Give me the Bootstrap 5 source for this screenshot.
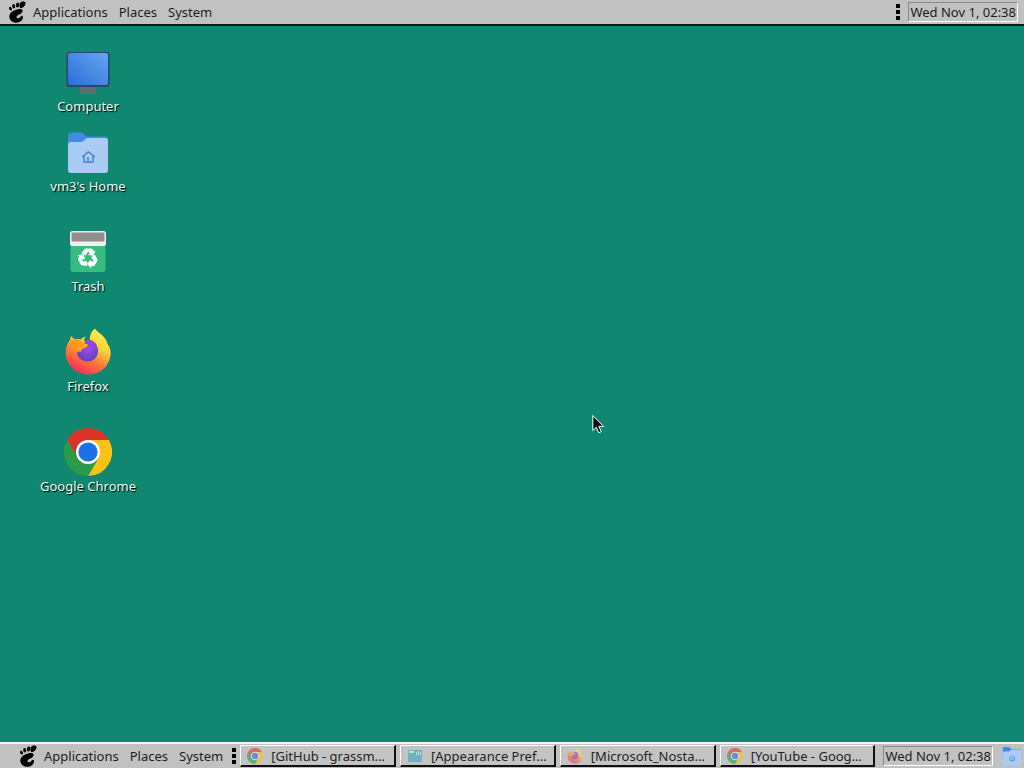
<!DOCTYPE html>
<html lang="en">
<head>
<meta charset="utf-8">
<meta name="viewport" content="width=device-width, initial-scale=1">
<title>Desktop</title>
<link href="https://cdn.jsdelivr.net/npm/bootstrap@5.3.0/dist/css/bootstrap.min.css" rel="stylesheet">
<style>
body { font-family: "Noto Sans", sans-serif; font-size: 13px; line-height: 20px; color: #1c1c1c; background: #108770; cursor: default; }
.panel { background: #c2c1c2; height: 26px; }
.panel-top { border-bottom: 2px solid #161616; padding-left: 8px; padding-right: 6px; }
.panel-bottom { border-top: 2px solid #f4f4f4; padding-left: 19px; padding-right: 1px; }
.menu-item { border: 0; background: none; padding: 0 5px 0 6px; color: inherit; line-height: 20px; }
.menu-item:hover { background: #d4d4d4; }
.foot { width: 19px; height: 22px; }
.grip { width: 4px; height: 16px; }
.clock { border: 1px solid #888; border-right-color: #fff; border-bottom-color: #fff; padding: 0 1px; background: none; color: inherit; height: 20px; line-height: 18px; }
.task { flex: 1 1 0; min-width: 0; height: 22px; padding: 1px 6px 0 5px; background: #c4c3c4; color: #222; border: 2px solid #fff; border-width: 1px 2px 2px 1px; border-right-color: #111; border-bottom-color: #111; line-height: 18px; }
.task svg { width: 18px; height: 16px; margin-right: 7px; opacity: .6; }
.launchers { padding: 22px 38px; }
.launcher { width: 100px; color: #eefaf6; text-shadow: 1px 1px 1px #000; text-decoration: none; margin-bottom: 32px; }
.launcher:first-child { margin-bottom: 12px; }
.launcher svg { width: 48px; height: 48px; }
.pointer { left: 58%; top: 54.2%; margin-left: -2px; width: 13px; height: 20px; }
</style>
</head>
<body class="d-flex flex-column vh-100 overflow-hidden">
<svg width="0" height="0" class="position-absolute" aria-hidden="true">
  <defs>
    <linearGradient id="screen" x1="0" y1="1" x2="1" y2="0"><stop stop-color="#286fd9"/><stop offset="1" stop-color="#68a4f0"/></linearGradient>
    <linearGradient id="flame" x1=".8" y1="0" x2=".3" y2="1"><stop stop-color="#fff24a"/><stop offset=".35" stop-color="#ffd23a"/><stop offset=".65" stop-color="#ff7a34"/><stop offset="1" stop-color="#f5265c"/></linearGradient>
    <linearGradient id="flameHead" x1="0" y1="0" x2="1" y2="0"><stop stop-color="#ff8a1e"/><stop offset="1" stop-color="#ffb02b"/></linearGradient>
    <radialGradient id="globe" cx=".55" cy=".35" r=".7"><stop stop-color="#a448e0"/><stop offset="1" stop-color="#5644c4"/></radialGradient>
    <symbol id="i-foot" viewBox="0 0 19 22">
      <path d="M14.2.5c2.700-.5 4 .6 3.100 3.100-.7 1.900-2.700 3.600-4.300 3.600-2.200 0-2.200-6.200 1.200-6.700Z"/>
      <ellipse cx="9.600" cy="4" rx="1.700" ry="2.600" transform="rotate(12 9.600 4)"/>
      <ellipse cx="5.700" cy="5.300" rx="1.500" ry="2.300" transform="rotate(-8 5.700 5.300)"/>
      <ellipse cx="2.500" cy="7.700" rx="1.300" ry="2" transform="rotate(-28 2.500 7.700)"/>
      <path d="M14.600 10.200c.4-1.900-1.900-2.500-4.800-2C5.500 9 1.300 11.800 1.300 15.500c0 3.700 3.300 6.300 7 6.300 3.500 0 6.300-2.100 6.700-5.200.2-1.900-1.500-2.300-2.400-1.200-.8 1.200-1.400 2-2.900 1.800-1.300-.2-1.700-1.400-.5-2.500 1.500-1.400 4.900-1.900 5.400-4.500Z"/>
    </symbol>
    <symbol id="i-grip" viewBox="0 0 4 16"><path d="M0 0h4v4H0zM0 6h4v4H0zM0 12h4v4H0z"/></symbol>
    <symbol id="i-chrome" viewBox="0 0 48 48">
      <path fill="#db3328" d="M3.200 12A24 24 0 0 1 44.800 12H24L13.600 30Z"/>
      <path fill="#fbc116" d="M44.800 12A24 24 0 0 1 24 48L34.400 30 24 12Z"/>
      <path fill="#2a9b49" d="M24 48A24 24 0 0 1 3.200 12L13.600 30H34.400Z"/>
      <circle cx="24" cy="24" r="12" fill="#fff"/><circle cx="24" cy="24" r="9.600" fill="#1b70e6"/>
    </symbol>
    <symbol id="i-firefox" viewBox="0 0 48 48">
      <path fill="url(#flame)" d="M31 .5C33 4 38 6 41 10.500c1.500 2 2 3.500 2.300 5C46 19 47 23 46.500 27 45 39 36 46.500 24 46.500S2 37 1.700 25c-.1-5 1.300-9.500 4.300-13 .1-1.600.6-3 1.500-4 1 1.800 2.200 2.800 3.800 3.300 2-.4 3.700-.3 5.300.2C18 10 20 8.800 22 8.500c-1.300 1.400-2 2.500-2 4l4 1.500 2-2C25.500 8 27 3.500 31 .5Z"/>
      <path fill="url(#globe)" d="M23 13c7-1 12 5 11 11.500-1 6-5.500 9-10.500 9S13 30 13 24.500c0-2 .8-3.800 2-5Z"/>
      <path fill="url(#flameHead)" d="M7 13c4-2 7-2 10-.5 2 1.500 3 3.500 6.500 3.500.8 2-1.500 4-5 5-1 .8-1.500 1.500-1.500 3-1.800-1-3.300-.5-4.500 1C9 23 7 18 7 13Z"/>
      <path fill="#9a44d3" d="M20 13.500c5-3 11-1 13 4-3-1.800-5-2-6-1l-3.500-1Z"/>
    </symbol>
    <symbol id="i-home" viewBox="0 0 48 48">
      <path fill="#438be6" d="M4 7.500A3 3 0 0 1 7 4.500h10c3 0 3.500 4 6.500 4H41a3 3 0 0 1 3 3V30H4Z"/>
      <path fill="#a9cbf4" d="M4 17a3 3 0 0 1 3-3h10c3 0 4-4 7-4h17a3 3 0 0 1 3 3v29a3 3 0 0 1-3 3H7a3 3 0 0 1-3-3Z"/>
      <path fill="none" stroke="#4a83c8" stroke-width="1.500" d="m18 29 6.500-5 6.500 5M20 28v6h9v-6M24 34v-5"/>
    </symbol>
    <symbol id="i-window" viewBox="0 0 18 16"><rect x="2" y="2" width="14" height="12" rx="1" fill="#38a9c0"/><path fill="#c9eef2" d="M3 3h5v2H3zM10 4h1v3h-1zM12 3h1v4h-1zM14 4h1v3h-1z"/></symbol>
  </defs>
</svg>

<header class="panel panel-top d-flex align-items-center flex-shrink-0">
  <svg class="foot" aria-hidden="true"><use href="#i-foot"/></svg>
  <nav class="d-flex" aria-label="Top menu">
    <button type="button" class="menu-item">Applications</button>
    <button type="button" class="menu-item">Places</button>
    <button type="button" class="menu-item">System</button>
  </nav>
  <svg class="grip ms-auto me-2" aria-hidden="true"><use href="#i-grip"/></svg>
  <button type="button" class="clock text-nowrap">Wed Nov 1, 02:38</button>
</header>

<main class="flex-grow-1 position-relative">
  <div class="launchers d-flex flex-column align-items-start">
    <a href="#computer" class="launcher d-flex flex-column align-items-center">
      <svg viewBox="0 0 48 48" aria-hidden="true"><path fill="#626b70" d="M16 39h16v5l2 2H14l2-2Z"/><rect x="2.500" y="4" width="43" height="35" rx="3" fill="#24496f"/><rect x="4" y="5" width="40" height="32" rx="2" fill="url(#screen)"/></svg>
      <span>Computer</span>
    </a>
    <a href="#home" class="launcher d-flex flex-column align-items-center">
      <svg aria-hidden="true"><use href="#i-home"/></svg>
      <span>vm3's Home</span>
    </a>
    <a href="#trash" class="launcher d-flex flex-column align-items-center">
      <svg viewBox="0 0 48 48" aria-hidden="true">
        <path fill="#37bd80" d="M6.500 13h35v28a3 3 0 0 1-3 3h-29a3 3 0 0 1-3-3Z"/>
        <rect x="6" y="3" width="36" height="15" rx="2.500" fill="#f1eeec"/><rect x="7.500" y="4.500" width="33" height="9" rx="1" fill="#928e90"/>
        <g id="arrow" fill="#fff"><path d="m17.600 25.500 2.400-3.700c.7-1 1.500-1.300 2.500-1.300h4c1.200 0 1.900.5 2.500 1.500l.7 1.300 1.800-1-2 5.700-5.700-1.200 1.900-1.100-1.500-2.400-2.600 4.300Z"/></g>
        <use href="#arrow" transform="rotate(120 24 30)"/><use href="#arrow" transform="rotate(240 24 30)"/>
      </svg>
      <span>Trash</span>
    </a>
    <a href="#firefox" class="launcher d-flex flex-column align-items-center">
      <svg aria-hidden="true"><use href="#i-firefox"/></svg>
      <span>Firefox</span>
    </a>
    <a href="#chrome" class="launcher d-flex flex-column align-items-center">
      <svg aria-hidden="true"><use href="#i-chrome"/></svg>
      <span>Google Chrome</span>
    </a>
  </div>
  <svg class="pointer position-absolute" viewBox="0 0 13 20" aria-hidden="true"><path fill="#111" stroke="#fff" d="M.8 1.500v15l3.500-3.200 2.500 5.500 2.500-1.200-2.400-5.100h4.800Z"/></svg>
</main>

<footer class="panel panel-bottom d-flex align-items-center flex-shrink-0">
  <svg class="foot" aria-hidden="true"><use href="#i-foot"/></svg>
  <nav class="d-flex" aria-label="Bottom menu">
    <button type="button" class="menu-item">Applications</button>
    <button type="button" class="menu-item">Places</button>
    <button type="button" class="menu-item">System</button>
  </nav>
  <svg class="grip ms-1 me-1 flex-shrink-0" aria-hidden="true"><use href="#i-grip"/></svg>
  <div class="d-flex gap-1 flex-grow-1 me-2">
    <button type="button" class="task d-flex align-items-center"><svg class="flex-shrink-0" aria-hidden="true"><use href="#i-chrome"/></svg><span class="text-nowrap">[GitHub - grassm…</span></button>
    <button type="button" class="task d-flex align-items-center"><svg class="flex-shrink-0" aria-hidden="true"><use href="#i-window"/></svg><span class="text-nowrap">[Appearance Pref…</span></button>
    <button type="button" class="task d-flex align-items-center"><svg class="flex-shrink-0" aria-hidden="true"><use href="#i-firefox"/></svg><span class="text-nowrap">[Microsoft_Nosta…</span></button>
    <button type="button" class="task d-flex align-items-center"><svg class="flex-shrink-0" aria-hidden="true"><use href="#i-chrome"/></svg><span class="text-nowrap">[YouTube - Goog…</span></button>
  </div>
  <button type="button" class="clock text-nowrap me-2">Wed Nov 1, 02:38</button>
  <svg width="22" height="22" class="flex-shrink-0" aria-hidden="true"><use href="#i-home"/></svg>
</footer>
<script src="https://cdn.jsdelivr.net/npm/bootstrap@5.3.0/dist/js/bootstrap.bundle.min.js"></script>
</body>
</html>
